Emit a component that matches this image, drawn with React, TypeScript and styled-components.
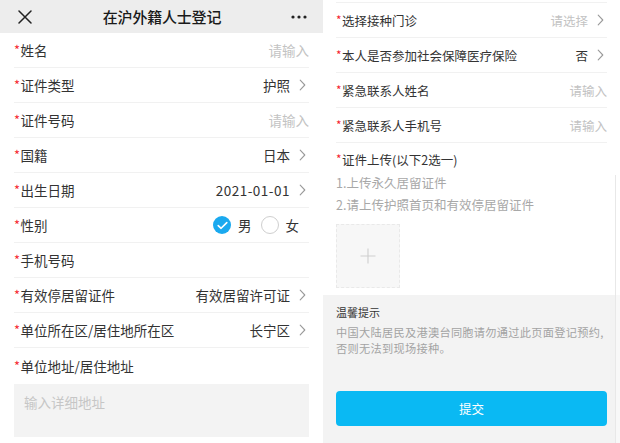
import React from 'react';
import styled, { createGlobalStyle } from 'styled-components';

const Global = createGlobalStyle`
  html, body { margin: 0; padding: 0; background: #fff; }
  body { font-family: "Noto Sans CJK SC", "Noto Sans", sans-serif; -webkit-font-smoothing: antialiased; }
  * { box-sizing: border-box; }
`;

const Page = styled.div`
  display: flex;
  width: 620px;
  height: 443px;
  overflow: hidden;
  background: #fff;
`;

const LeftPanel = styled.div`
  width: 323px;
  flex: none;
  display: flex;
  flex-direction: column;
  font-size: 13.5px;
`;

const RightPanel = styled.div`
  position: relative;
  flex: 1;
  display: flex;
  flex-direction: column;
  font-size: 12.5px;
`;

const Header = styled.div`
  height: 33px;
  flex: none;
  background: #ededed;
  display: flex;
  align-items: center;
  justify-content: space-between;
  padding: 0 16px 0 17px;
`;

const Title = styled.div`
  font-size: 15px;
  font-weight: 500;
  color: #1a1a1a;
  letter-spacing: -0.2px;
`;

const HeaderIcon = styled.div`
  width: 16px;
  height: 16px;
  display: flex;
  align-items: center;
  justify-content: center;
`;

const Form = styled.div<{ $pad: number; $top?: number }>`
  padding: ${(p) => p.$top ?? 0}px ${(p) => p.$pad}px 0;
  display: flex;
  flex-direction: column;
`;

const List = styled.div<{ $topLine?: boolean }>`
  border-top: ${(p) => (p.$topLine ? '1px solid #f1f1f1' : 'none')};
`;

const Row = styled.div<{ $noBorder?: boolean; $h?: number }>`
  height: ${(p) => (p.$h ?? 34) + (p.$noBorder ? 0 : 1)}px;
  display: flex;
  align-items: center;
  justify-content: space-between;
  border-bottom: ${(p) => (p.$noBorder ? 'none' : '1px solid #f1f1f1')};
`;

const Label = styled.div`
  color: #333;
  white-space: nowrap;
  display: flex;
  align-items: center;
`;

const Star = styled.span`
  color: #f5222d;
  font-size: 0.95em;
  margin-right: 0.5px;
  position: relative;
  top: -0.5px;
`;

const Value = styled.div<{ $placeholder?: boolean }>`
  display: flex;
  align-items: center;
  gap: 9px;
  color: ${(p) => (p.$placeholder ? '#c3c3c3' : '#333')};
  white-space: nowrap;
  padding-right: ${(p) => (p.$placeholder ? 0 : 3)}px;
`;

const ValueText = styled.span<{ $placeholder?: boolean; $digits?: boolean }>`
  color: ${(p) => (p.$placeholder ? '#c3c3c3' : '#333')};
  letter-spacing: ${(p) => (p.$digits ? '0.5px' : '0')};
`;

const RadioGroup = styled.div`
  display: flex;
  align-items: center;
  padding-right: 10px;
`;

const RadioItem = styled.div`
  display: flex;
  align-items: center;
  gap: 7px;
  margin-left: 9px;
  color: #333;
`;

const RadioCircle = styled.div<{ $checked?: boolean }>`
  width: 18px;
  height: 18px;
  border-radius: 50%;
  background: ${(p) => (p.$checked ? '#1aa9ef' : '#fff')};
  border: ${(p) => (p.$checked ? 'none' : '1px solid #cfcfcf')};
  display: flex;
  align-items: center;
  justify-content: center;
`;

const TextArea = styled.div`
  height: 53px;
  background: #f3f3f3;
  padding: 8px 10px;
  color: #c6c6c6;
  line-height: 20px;
`;

const Spacer = styled.div<{ $h: number }>`
  height: ${(p) => p.$h}px;
  flex: none;
`;

const SectionLabel = styled(Label)`
  height: 20px;
  margin-top: 6px;
`;

const SubText = styled.div`
  color: #a8a8a8;
  line-height: 22px;
  height: 22px;
  white-space: nowrap;
`;

const UploadBox = styled.div`
  width: 64px;
  height: 64px;
  margin: 8px 0 7px;
  background: #f7f7f7;
  border: 1px dashed #e9e9e9;
  display: flex;
  align-items: center;
  justify-content: center;
`;

const Notice = styled.div`
  flex: 1;
  background: #f3f3f3;
  padding: 8px 13px 0;
  display: flex;
  flex-direction: column;
`;

const NoticeTitle = styled.div`
  font-size: 11px;
  line-height: 18px;
  color: #333;
`;

const NoticeText = styled.div`
  margin-top: 3px;
  font-size: 11.2px;
  letter-spacing: 0.3px;
  line-height: 16px;
  color: #a3a3a3;
  white-space: nowrap;
`;

const SubmitButton = styled.button`
  margin-top: 35px;
  height: 35px;
  width: 100%;
  border: none;
  border-radius: 4px;
  background: #0ab9f3;
  color: #fff;
  font-family: inherit;
  font-size: 12.5px;
  padding: 0;
`;

const ScrollTrack = styled.div`
  position: absolute;
  right: 0;
  top: 175px;
  bottom: 0;
  width: 5px;
  border-left: 1px solid #e8e8e8;
  background: rgba(255, 255, 255, 0.45);
`;

const Chevron = () => (
  <svg width="7" height="12" viewBox="0 0 7 12" fill="none">
    <path d="M1.2 1.2 L5.8 6 L1.2 10.8" stroke="#9a9a9a" strokeWidth="1.1" strokeLinecap="round" strokeLinejoin="round" />
  </svg>
);

type Field = {
  label: string;
  value?: string;
  placeholder?: boolean;
  arrow?: boolean;
  radio?: boolean;
  empty?: boolean;
  digits?: boolean;
};

const leftFields: Field[] = [
  { label: '姓名', value: '请输入', placeholder: true },
  { label: '证件类型', value: '护照', arrow: true },
  { label: '证件号码', value: '请输入', placeholder: true },
  { label: '国籍', value: '日本', arrow: true },
  { label: '出生日期', value: '2021-01-01', arrow: true, digits: true },
  { label: '性别', radio: true },
  { label: '手机号码', empty: true },
  { label: '有效停居留证件', value: '有效居留许可证', arrow: true },
  { label: '单位所在区/居住地所在区', value: '长宁区', arrow: true },
];

const rightFields: Field[] = [
  { label: '选择接种门诊', value: '请选择', placeholder: true, arrow: true },
  { label: '本人是否参加社会保障医疗保险', value: '否', arrow: true },
  { label: '紧急联系人姓名', value: '请输入', placeholder: true },
  { label: '紧急联系人手机号', value: '请输入', placeholder: true },
];

const FieldRow: React.FC<{ f: Field }> = ({ f }) => (
  <Row>
    <Label>
      <Star>*</Star>
      {f.label}
    </Label>
    {f.radio ? (
      <RadioGroup>
        <RadioItem>
          <RadioCircle $checked>
            <svg width="11" height="9" viewBox="0 0 11 9" fill="none">
              <path d="M1.2 4.6 L4.1 7.3 L9.8 1.6" stroke="#fff" strokeWidth="1.6" strokeLinecap="round" strokeLinejoin="round" />
            </svg>
          </RadioCircle>
          男
        </RadioItem>
        <RadioItem>
          <RadioCircle />
          女
        </RadioItem>
      </RadioGroup>
    ) : f.empty ? null : (
      <Value $placeholder={f.placeholder && !f.arrow}>
        <ValueText $placeholder={f.placeholder} $digits={f.digits}>
          {f.value}
        </ValueText>
        {f.arrow && <Chevron />}
      </Value>
    )}
  </Row>
);

export default function App() {
  return (
    <>
      <Global />
      <Page>
        <LeftPanel>
          <Header>
            <HeaderIcon>
              <svg width="14" height="14" viewBox="0 0 14 14" fill="none">
                <path d="M1 1 L13 13 M13 1 L1 13" stroke="#222" strokeWidth="1.5" strokeLinecap="round" />
              </svg>
            </HeaderIcon>
            <Title>在沪外籍人士登记</Title>
            <HeaderIcon>
              <svg width="16" height="4" viewBox="0 0 16 4" fill="#222">
                <circle cx="2" cy="2" r="1.6" />
                <circle cx="8" cy="2" r="1.6" />
                <circle cx="14" cy="2" r="1.6" />
              </svg>
            </HeaderIcon>
          </Header>
          <Form $pad={14}>
            <List>
              {leftFields.map((f) => (
                <FieldRow key={f.label} f={f} />
              ))}
              <Row $noBorder $h={36}>
                <Label>
                  <Star>*</Star>
                  单位地址/居住地址
                </Label>
              </Row>
            </List>
            <TextArea>输入详细地址</TextArea>
          </Form>
        </LeftPanel>
        <RightPanel>
          <Spacer $h={2} />
          <Form $pad={13}>
            <List $topLine>
              {rightFields.map((f) => (
                <FieldRow key={f.label} f={f} />
              ))}
            </List>
            <SectionLabel>
              <Star>*</Star>
              证件上传(以下2选一)
            </SectionLabel>
            <Spacer $h={3} />
            <SubText>1.上传永久居留证件</SubText>
            <SubText>2.请上传护照首页和有效停居留证件</SubText>
            <UploadBox>
              <svg width="16" height="16" viewBox="0 0 16 16" fill="none">
                <path d="M8 0.5 V15.5 M0.5 8 H15.5" stroke="#cfcfcf" strokeWidth="1.1" />
              </svg>
            </UploadBox>
          </Form>
          <Notice>
            <NoticeTitle>温馨提示</NoticeTitle>
            <NoticeText>
              中国大陆居民及港澳台同胞请勿通过此页面登记预约,
              <br />
              否则无法到现场接种。
            </NoticeText>
            <SubmitButton>提交</SubmitButton>
          </Notice>
          <ScrollTrack />
        </RightPanel>
      </Page>
    </>
  );
}
